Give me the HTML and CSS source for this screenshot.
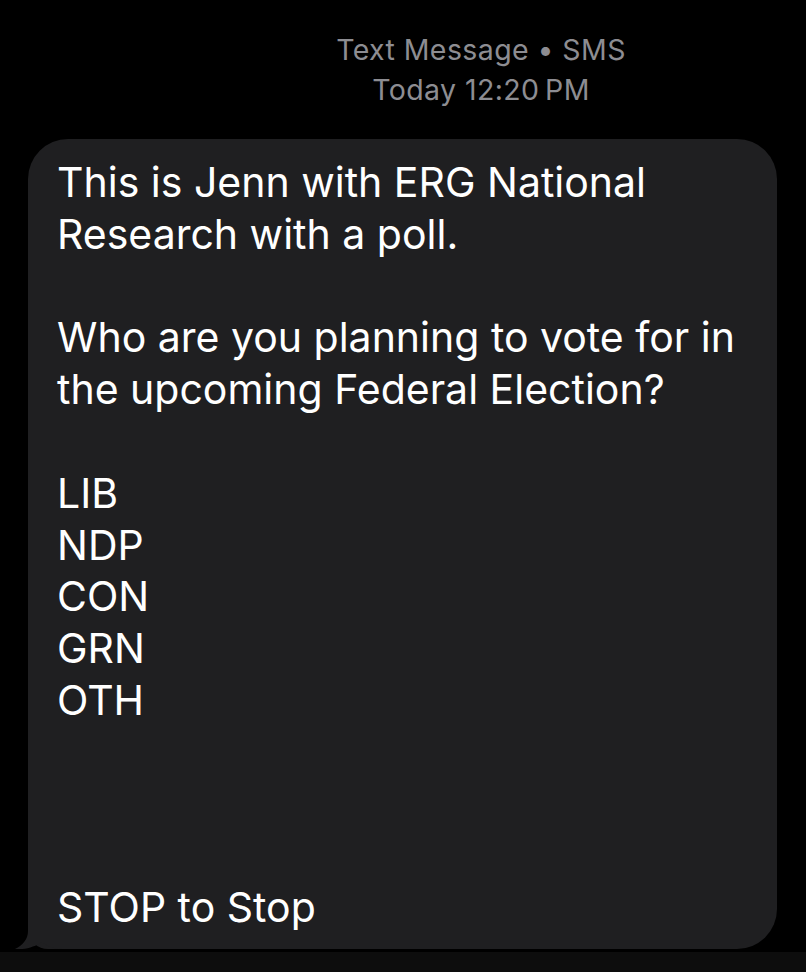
FILE: index.html
```html
<!DOCTYPE html>
<html>
<head>
<meta charset="utf-8">
<link rel="stylesheet" href="styles.css">
</head>
<body>
<div class="screen">
  <header class="meta">
    <div class="meta-line">Text Message • SMS</div>
    <div class="meta-line">Today 12:20&#8201;PM</div>
  </header>
  <div class="bubble">
    <svg class="tail" width="50" height="50" viewBox="0 0 50 50"><path d="M14,0 L14,32 C14,40 9,46 1,50 C10,51 21,48 28,43 C33,47 40,50 48,50 L50,50 L50,0 Z" fill="#1f1f21"/></svg>
    <div class="msg">This is Jenn with ERG National<br>Research with a poll.<br><br>Who are you planning to vote for in<br>the upcoming Federal Election?<br><br>LIB<br>NDP<br>CON<br>GRN<br>OTH<br><br><br><br>STOP to Stop</div>
  </div>
  <div class="bottom"></div>
</div>
</body>
</html>
```

FILE: styles.css
```css
html, body {
  margin: 0;
  padding: 0;
  background: #000;
}
.screen {
  width: 806px;
  height: 972px;
  overflow: hidden;
  background: #000;
  display: flex;
  flex-direction: column;
  font-family: Inter, "Liberation Sans", sans-serif;
}
.meta {
  padding: 30px 0 0 156px;
  text-align: center;
  color: #8d8d92;
  font-size: 28.5px;
  letter-spacing: 0.4px;
  line-height: 40px;
  height: 139px;
  flex: none;
  box-sizing: border-box;
}
.bubble {
  position: relative;
  margin-left: 28px;
  width: 749px;
  height: 810px;
  flex: none;
  box-sizing: border-box;
  background: #1f1f21;
  border-radius: 40px 40px 40px 20px;
  padding: 18px 20px 0 29px;
}
.msg {
  position: relative;
  color: #fff;
  font-size: 41px;
  line-height: 51.8px;
  white-space: nowrap;
}
.tail {
  position: absolute;
  left: -14px;
  bottom: 0;
  display: block;
}
.bottom {
  margin-top: 3px;
  flex: 1;
  background: #0d0d0d;
}
```
